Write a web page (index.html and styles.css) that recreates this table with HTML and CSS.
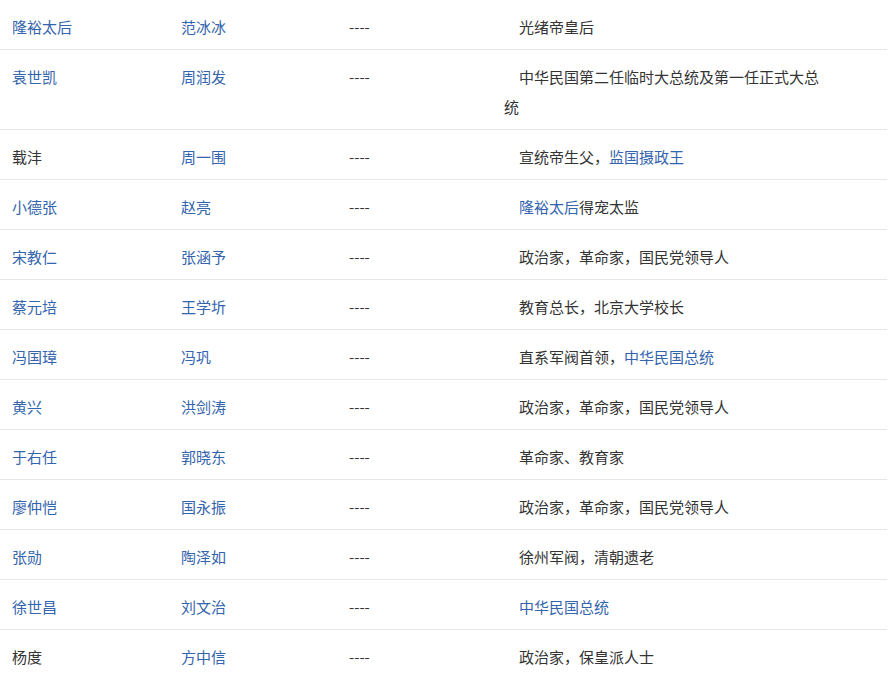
FILE: index.html
```html
<!DOCTYPE html>
<html lang="zh-CN">
<head>
<meta charset="utf-8">
<title>演员表</title>
<link rel="stylesheet" href="styles.css">
</head>
<body>
<table class="cast">
  <colgroup>
    <col class="c1"><col class="c2"><col class="c3"><col class="c4">
  </colgroup>
  <tbody>
    <tr><td><a href="#">隆裕太后</a></td><td><a href="#">范冰冰</a></td><td>----</td><td class="desc">光绪帝皇后</td></tr>
    <tr><td><a href="#">袁世凯</a></td><td><a href="#">周润发</a></td><td>----</td><td class="desc">中华民国第二任临时大总统及第一任正式大总统</td></tr>
    <tr><td>载沣</td><td><a href="#">周一围</a></td><td>----</td><td class="desc">宣统帝生父，<a href="#">监国摄政王</a></td></tr>
    <tr><td><a href="#">小德张</a></td><td><a href="#">赵亮</a></td><td>----</td><td class="desc"><a href="#">隆裕太后</a>得宠太监</td></tr>
    <tr><td><a href="#">宋教仁</a></td><td><a href="#">张涵予</a></td><td>----</td><td class="desc">政治家，革命家，国民党领导人</td></tr>
    <tr><td><a href="#">蔡元培</a></td><td><a href="#">王学圻</a></td><td>----</td><td class="desc">教育总长，北京大学校长</td></tr>
    <tr><td><a href="#">冯国璋</a></td><td><a href="#">冯巩</a></td><td>----</td><td class="desc">直系军阀首领，<a href="#">中华民国总统</a></td></tr>
    <tr><td><a href="#">黄兴</a></td><td><a href="#">洪剑涛</a></td><td>----</td><td class="desc">政治家，革命家，国民党领导人</td></tr>
    <tr><td><a href="#">于右任</a></td><td><a href="#">郭晓东</a></td><td>----</td><td class="desc">革命家、教育家</td></tr>
    <tr><td><a href="#">廖仲恺</a></td><td><a href="#">国永振</a></td><td>----</td><td class="desc">政治家，革命家，国民党领导人</td></tr>
    <tr><td><a href="#">张勋</a></td><td><a href="#">陶泽如</a></td><td>----</td><td class="desc">徐州军阀，清朝遗老</td></tr>
    <tr><td><a href="#">徐世昌</a></td><td><a href="#">刘文治</a></td><td>----</td><td class="desc"><a href="#">中华民国总统</a></td></tr>
    <tr><td>杨度</td><td><a href="#">方中信</a></td><td>----</td><td class="desc">政治家，保皇派人士</td></tr>
  </tbody>
</table>
</body>
</html>
```
FILE: styles.css
```css
html, body {
  margin: 0;
  padding: 0;
  background: #ffffff;
}
body {
  font-family: "Noto Sans CJK SC", "Noto Sans", sans-serif;
  font-size: 15px;
  color: #333333;
}
.cast {
  width: 887px;
  table-layout: fixed;
  border-collapse: collapse;
  border-spacing: 0;
}
.c1 { width: 169px; }
.c2 { width: 168px; }
.c3 { width: 156px; }
.c4 { width: 394px; }
.cast td {
  padding: 12px 12px 7px 12px;
  line-height: 30px;
  vertical-align: top;
  border-bottom: 1px solid #e6e6e6;
  white-space: normal;
}
.cast td.desc {
  padding-left: 11px;
  padding-right: 66px;
  text-indent: 15px;
}
.cast a {
  color: #3364ad;
  text-decoration: none;
}
```
